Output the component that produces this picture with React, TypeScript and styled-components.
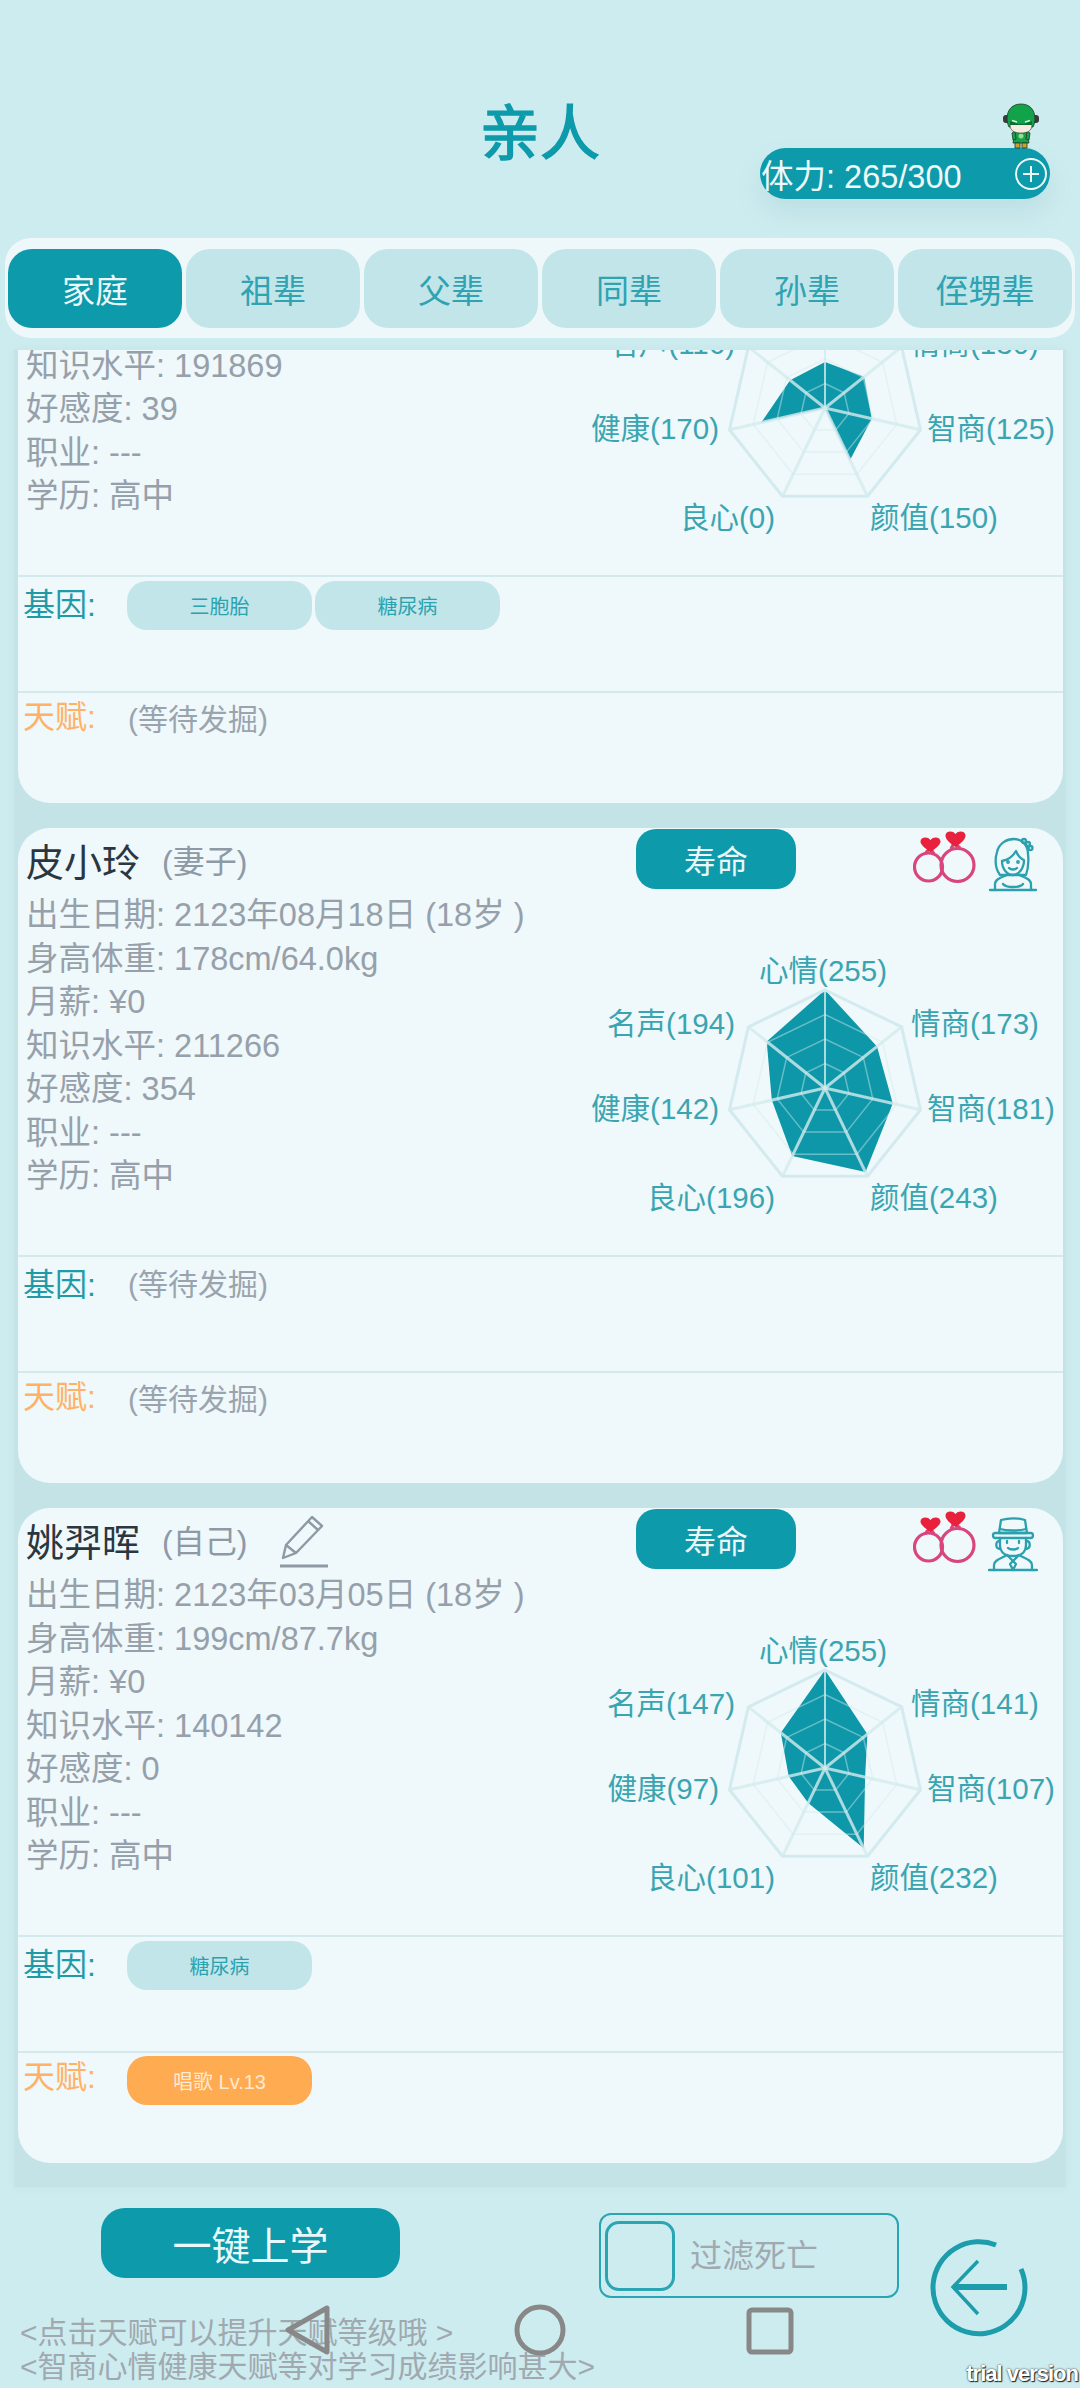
import * as React from 'react';
import styled, { createGlobalStyle } from 'styled-components';

const TEAL = '#0d9aab';
const TEXT_STACK = '"Liberation Sans", "Noto Sans CJK SC", sans-serif';

const GlobalStyle = createGlobalStyle`
  html, body {
    margin: 0;
    padding: 0;
    background: #cdecef;
  }
  body {
    font-family: ${TEXT_STACK};
  }
`;

const Page = styled.div`
  position: relative;
  width: 1080px;
  height: 2388px;
  display: flex;
  flex-direction: column;
  overflow: hidden;
  background: #cdecef;
`;

const Header = styled.header`
  height: 238px;
  flex-shrink: 0;
  display: grid;
  grid-template-columns: 1fr auto 1fr;
  box-sizing: border-box;
`;

const Title = styled.h1`
  grid-column: 2;
  margin: 0;
  padding-top: 92px;
  font-size: 60px;
  line-height: 86px;
  font-weight: 400;
  color: ${TEAL};
  -webkit-text-stroke: 1.4px ${TEAL};
`;

const StaminaWrap = styled.div`
  grid-column: 3;
  display: flex;
  flex-direction: column;
  align-items: flex-end;
  padding: 103px 30px 0 0;
`;

const Hero = styled.svg`
  display: block;
  width: 38px;
  height: 47px;
  margin: 0 10px -2px 0;
  position: relative;
  z-index: 1;
`;

const StaminaPill = styled.div`
  width: 290px;
  height: 51px;
  flex-shrink: 0;
  display: flex;
  align-items: center;
  justify-content: space-between;
  box-sizing: border-box;
  padding: 0 2px 0 1px;
  border-radius: 26px;
  background: ${TEAL};
  color: #eef9fa;
  font-size: 32.5px;
  box-shadow: 0 14px 26px rgba(90, 150, 160, 0.14);
`;

const TabBar = styled.nav`
  height: 100px;
  flex-shrink: 0;
  margin: 0 5px 0 5px;
  box-sizing: border-box;
  padding: 11px 3px;
  display: flex;
  gap: 4px;
  border-radius: 26px;
  background: #eef8fa;
`;

const Tab = styled.div<{ $active?: boolean }>`
  flex: 1;
  height: 79px;
  display: flex;
  align-items: center;
  justify-content: center;
  border-radius: 24px;
  font-size: 33px;
  background: ${(p) => (p.$active ? TEAL : '#c2e5ea')};
  color: ${(p) => (p.$active ? '#eaf8fa' : '#2fa3b1')};
`;

const ListPanel = styled.main`
  height: 1837px;
  flex-shrink: 0;
  margin: 12px 14px 0;
  box-sizing: border-box;
  padding: 0 4px 24px;
  display: flex;
  flex-direction: column;
  justify-content: flex-end;
  gap: 25px;
  overflow: hidden;
  background: #c3e3e6;
  box-shadow: 0 0 8px #c3e3e6;
`;

const Card = styled.article`
  height: 655px;
  flex-shrink: 0;
  width: 1045px;
  display: flex;
  flex-direction: column;
  border-radius: 32px;
  background: #eff8fa;
  overflow: hidden;
`;

const InfoSection = styled.section`
  height: 427px;
  flex-shrink: 0;
  display: flex;
`;

const InfoColumn = styled.div`
  width: 562px;
  flex-shrink: 0;
`;

const NameRow = styled.div`
  height: 62px;
  margin-bottom: 4px;
  display: flex;
  align-items: center;
  padding-left: 8px;
`;

const Name = styled.span`
  font-size: 38px;
  color: #2a3640;
`;

const Relation = styled.span`
  font-size: 32px;
  color: #8e99a6;
  margin-left: 22px;
`;

const EditIcon = styled.svg`
  width: 48px;
  height: 54px;
  margin: 4px 0 0 33px;
`;

const InfoLine = styled.div`
  min-height: 43.5px;
  padding-left: 8px;
  font-size: 32.5px;
  line-height: 43.5px;
  color: #96a0aa;
  white-space: pre;
`;

const ChartColumn = styled.div`
  flex: 1;
  min-width: 0;
`;

const ChartTop = styled.div`
  height: 60px;
  margin-top: 1px;
  display: flex;
  align-items: flex-start;
  padding-left: 56px;
`;

const LifeButton = styled.div`
  width: 160px;
  height: 60px;
  display: flex;
  align-items: center;
  justify-content: center;
  border-radius: 20px;
  background: ${TEAL};
  color: #eaf8fa;
  font-size: 32px;
`;

const RingsIcon = styled.svg`
  width: 63px;
  height: 56px;
  margin: 2px 0 0 117px;
`;

const PersonIcon = styled.svg`
  width: 50px;
  height: 56px;
  margin: 8px 0 0 12px;
`;

const RadarSvg = styled.svg`
  display: block;
  width: 483px;
  height: 290px;
  margin-top: 51px;
`;

const AxisLabel = styled.text`
  font-family: ${TEXT_STACK};
  font-size: 29.5px;
  fill: #3aa5b1;
  dominant-baseline: central;
`;

const DetailSection = styled.section<{ $height: number; $pad: number }>`
  height: ${(p) => p.$height}px;
  flex-shrink: 0;
  box-sizing: border-box;
  display: flex;
  align-items: flex-start;
  padding: ${(p) => p.$pad}px 0 0 7px;
  border-top: 2px solid #d3e9ec;
`;

const DetailLabel = styled.div<{ $talent?: boolean }>`
  width: 102px;
  margin-left: -2px;
  flex-shrink: 0;
  font-size: 32px;
  line-height: ${(p) => (p.$talent ? 42 : 48)}px;
  color: ${(p) => (p.$talent ? '#ffb265' : '#1f9ba8')};
`;

const Pending = styled.div`
  margin: 3px 0 0 3px;
  font-size: 30px;
  line-height: 42px;
  color: #9aa4ae;
`;

const Chips = styled.div`
  display: flex;
  gap: 3px;
  margin-left: 2px;
`;

const Chip = styled.div<{ $talent?: boolean }>`
  width: 185px;
  height: 49px;
  display: flex;
  align-items: center;
  justify-content: center;
  border-radius: 20px;
  font-size: 20px;
  background: ${(p) => (p.$talent ? '#ffab52' : '#c2e5ea')};
  color: ${(p) => (p.$talent ? '#ffe9d0' : '#2ba3af')};
`;

const Footer = styled.footer`
  flex: 1;
  display: flex;
  align-items: flex-start;
`;

const FooterLeft = styled.div`
  width: 599px;
  flex-shrink: 0;
  box-sizing: border-box;
  padding: 21px 0 0 20px;
`;

const SchoolButton = styled.div`
  width: 299px;
  height: 70px;
  margin-left: 81px;
  display: flex;
  align-items: center;
  justify-content: center;
  border-radius: 24px;
  background: ${TEAL};
  color: #eaf8fa;
  font-size: 39px;
`;

const Hints = styled.div`
  margin-top: 38px;
  font-size: 30px;
  line-height: 34px;
  color: #a0a9af;
  white-space: pre;
`;

const FilterBox = styled.div`
  width: 300px;
  height: 85px;
  margin-top: 26px;
  flex-shrink: 0;
  box-sizing: border-box;
  display: flex;
  align-items: center;
  padding-left: 4px;
  border: 2px solid #2ba5b3;
  border-radius: 12px;
`;

const FilterCheck = styled.div`
  width: 70px;
  height: 70px;
  box-sizing: border-box;
  border: 3px solid #2ba5b3;
  border-radius: 14px;
`;

const FilterText = styled.span`
  margin: 0 0 5px 15px;
  font-size: 32px;
  color: #a0a9af;
`;

const BackIcon = styled.svg`
  width: 100px;
  height: 100px;
  margin: 50px 0 0 30px;
  flex-shrink: 0;
`;

const SystemNav = styled.svg`
  position: absolute;
  left: 0;
  top: 2300px;
  width: 1080px;
  height: 60px;
  pointer-events: none;
`;

const Watermark = styled.div`
  position: absolute;
  right: 2px;
  bottom: 2px;
  font-size: 22px;
  line-height: 24px;
  font-weight: 700;
  letter-spacing: -1px;
  color: #ffffff;
  text-shadow: 0 0 2px #222, 1px 1px 1px #222;
`;

const AXES = ['心情', '情商', '智商', '颜值', '良心', '健康', '名声'];

const LABEL_SPOTS: Array<{ x: number; y: number; anchor: 'start' | 'middle' | 'end' }> = [
  { x: 243, y: 30, anchor: 'middle' },
  { x: 331, y: 83, anchor: 'start' },
  { x: 347, y: 168, anchor: 'start' },
  { x: 290, y: 257, anchor: 'start' },
  { x: 195, y: 257, anchor: 'end' },
  { x: 139, y: 168, anchor: 'end' },
  { x: 155, y: 83, anchor: 'end' },
];

const CX = 245;
const CY = 148;
const RADIUS = 98;

const polar = (index: number, r: number) => {
  const a = (index * 2 * Math.PI) / 7;
  return [CX + r * Math.sin(a), CY - r * Math.cos(a)];
};

const ringPoints = (r: number) =>
  AXES.map((_, i) => polar(i, r).map((n) => n.toFixed(1)).join(',')).join(' ');

const Radar = ({ values, scrolled }: { values: number[]; scrolled?: boolean }) => {
  const shape = values
    .map((v, i) => polar(i, (v / 255) * RADIUS).map((n) => n.toFixed(1)).join(','))
    .join(' ');
  return (
    <RadarSvg viewBox="0 0 483 290">
      <polygon points={shape} fill="#0e97a8" />
      {[0.25, 0.5, 0.75].map((k) => (
        <polygon key={k} points={ringPoints(RADIUS * k)} fill="none" stroke="#d3ebee" strokeOpacity="0.45" strokeWidth="1.5" />
      ))}
      <polygon points={ringPoints(RADIUS)} fill="none" stroke="#d3ebee" strokeWidth="3" />
      {AXES.map((_, i) => {
        const [x, y] = polar(i, RADIUS);
        return <line key={i} x1={CX} y1={CY} x2={x} y2={y} stroke="#d3ebee" strokeOpacity="0.8" strokeWidth={i === 0 ? 2 : 3} />;
      })}
      {AXES.map((axis, i) =>
        scrolled && i === 0 ? null : (
          <AxisLabel key={axis} x={LABEL_SPOTS[i].x} y={LABEL_SPOTS[i].y} textAnchor={LABEL_SPOTS[i].anchor}>
            {axis}({values[i]})
          </AxisLabel>
        )
      )}
    </RadarSvg>
  );
};

const Rings = () => (
  <RingsIcon viewBox="0 0 63 56">
    <g fill="none" stroke="#d8457f" strokeWidth="3.2">
      <circle cx="15.5" cy="36" r="14" />
      <circle cx="44.5" cy="34" r="16.5" />
      <path d="M12 23l5-6 4 6" />
      <path d="M38 18l3-6 6 5" />
    </g>
    <path d="M17.500 21C10 16 7.500 13 7.500 10.500c0-4.500 7-5.500 10-1.500 3-4 10-3 10 1.500 0 2.500-2.500 5.500-10 10.500z" fill="#e8213c" />
    <path d="M42.500 16C35 11 32.500 7.500 32.500 4.500c0-4.500 7-5.500 10-1.500 3-4 10-3 10 1.500 0 3-2.500 6.500-10 11.500z" fill="#e8213c" />
  </RingsIcon>
);

const WomanIcon = () => (
  <PersonIcon viewBox="0 0 50 56" fill="none" stroke="#2ba0ae" strokeWidth="2.3" strokeLinejoin="round" strokeLinecap="round">
    <path d="M2 53h46" />
    <path d="M7 53v-6c0-5 7-7 12-9M43 53v-6c0-5-7-7-12-9" />
    <path d="M15 47c3 4 17 4 20 0" />
    <path d="M12 38C7 31 7 22 9 15 11 6 19 2 26 2c8 0 14 6 14 15 1 8 0 15-2 21z" />
    <path d="M14 24c6-1 11-5 14-10 2 5 5 8 8 9 0 8-5 15-11 15S14 32 14 24z" />
    <circle cx="36" cy="4" r="2" />
    <circle cx="40" cy="7" r="2" />
    <circle cx="42.500" cy="11" r="2" />
    <path d="M21 31c2 2 6 2 8 0" />
    <circle cx="20" cy="25" r="0.800" />
    <circle cx="30" cy="25" r="0.800" />
  </PersonIcon>
);

const ManIcon = () => (
  <PersonIcon viewBox="0 0 50 56" fill="none" stroke="#2ba0ae" strokeWidth="2.3" strokeLinejoin="round" strokeLinecap="round">
    <path d="M1 53h48" />
    <path d="M6 53v-5c0-5 8-7 13-10l6 6 6-6c5 3 13 5 13 10v5" />
    <path d="M25 44l-3 3 3 6 3-6z" />
    <path d="M13 3c7-2 17-2 24 0l2 13H11z" />
    <path d="M12 12c7 2 19 2 26 0" />
    <rect x="5" y="16" width="40" height="5" rx="2.500" />
    <path d="M12 21v7c0 8 6 11 13 11s13-3 13-11v-7" />
    <path d="M12 24c-5 0-5 7 0 8M38 24c5 0 5 7 0 8" />
    <path d="M20 31c2 2 8 2 10 0" />
    <path d="M19 24v2M31 24v2" />
  </PersonIcon>
);

interface Person {
  name: string;
  relation: string;
  lines: string[];
  values: number[];
  genes: string[];
  talents: string[];
  gender: 'f' | 'm';
  editable?: boolean;
  scrolled?: boolean; // top of the card has scrolled under the tab bar
}

const PEOPLE: Person[] = [
  {
    name: '',
    relation: '',
    lines: ['', '', '', '知识水平: 191869', '好感度: 39', '职业: ---', '学历: 高中'],
    values: [120, 130, 125, 150, 0, 170, 116],
    genes: ['三胞胎', '糖尿病'],
    talents: [],
    gender: 'm',
    scrolled: true,
  },
  {
    name: '皮小玲',
    relation: '(妻子)',
    lines: ['出生日期: 2123年08月18日 (18岁 )', '身高体重: 178cm/64.0kg', '月薪: ¥0', '知识水平: 211266', '好感度: 354', '职业: ---', '学历: 高中'],
    values: [255, 173, 181, 243, 196, 142, 194],
    genes: [],
    talents: [],
    gender: 'f',
  },
  {
    name: '姚羿晖',
    relation: '(自己)',
    lines: ['出生日期: 2123年03月05日 (18岁 )', '身高体重: 199cm/87.7kg', '月薪: ¥0', '知识水平: 140142', '好感度: 0', '职业: ---', '学历: 高中'],
    values: [255, 141, 107, 232, 101, 97, 147],
    genes: ['糖尿病'],
    talents: ['唱歌 Lv.13'],
    gender: 'm',
    editable: true,
  },
];

const TABS = ['家庭', '祖辈', '父辈', '同辈', '孙辈', '侄甥辈'];

const PersonCard = ({ person }: { person: Person }) => (
  <Card>
    <InfoSection>
      <InfoColumn>
        <NameRow>
          <Name>{person.name}</Name>
          <Relation>{person.relation}</Relation>
          {person.editable && (
            <EditIcon viewBox="0 0 48 54" fill="none" stroke="#8d99a5" strokeWidth="2.4" strokeLinejoin="round">
              <path d="M3 44l3-13L32 3l10 9-26 27z" />
              <path d="M6 31l10 8M28 7l10 9" />
              <path d="M0 52h48" strokeWidth="3" />
            </EditIcon>
          )}
        </NameRow>
        {person.lines.map((line, i) => (
          <InfoLine key={i}>{line}</InfoLine>
        ))}
      </InfoColumn>
      <ChartColumn>
        <ChartTop>
          {!person.scrolled && (
            <>
              <LifeButton>寿命</LifeButton>
              <Rings />
              {person.gender === 'f' ? <WomanIcon /> : <ManIcon />}
            </>
          )}
        </ChartTop>
        <Radar values={person.values} scrolled={person.scrolled} />
      </ChartColumn>
    </InfoSection>
    <DetailSection $height={116} $pad={4}>
      <DetailLabel>基因:</DetailLabel>
      {person.genes.length ? (
        <Chips>
          {person.genes.map((gene) => (
            <Chip key={gene}>{gene}</Chip>
          ))}
        </Chips>
      ) : (
        <Pending>(等待发掘)</Pending>
      )}
    </DetailSection>
    <DetailSection $height={112} $pad={3}>
      <DetailLabel $talent>天赋:</DetailLabel>
      {person.talents.length ? (
        <Chips>
          {person.talents.map((talent) => (
            <Chip key={talent} $talent>{talent}</Chip>
          ))}
        </Chips>
      ) : (
        <Pending>(等待发掘)</Pending>
      )}
    </DetailSection>
  </Card>
);

const App = () => (
  <Page>
    <GlobalStyle />
    <Header>
      <Title>亲人</Title>
      <StaminaWrap>
        <Hero viewBox="0 0 38 47">
          <path d="M13 28h12l2 12h-16z" fill="#16a34a" stroke="#24352a" strokeWidth="0.800" />
          <path d="M13 40h5v5h-5zM20 40h5v5h-5z" fill="#c9a227" stroke="#24352a" strokeWidth="0.800" />
          <path d="M10 30l3-2 1 8-3 1zM28 30l-3-2-1 8 3 1z" fill="#16a34a" stroke="#24352a" strokeWidth="0.800" />
          <circle cx="19" cy="33" r="2.500" fill="#8fe08f" />
          <rect x="1" y="12" width="36" height="8" rx="3" fill="#3a3a3a" />
          <path d="M5 16C5 6 11 1 19 1s14 5 14 15c0 3-1 6-2 8H7c-1-2-2-5-2-8z" fill="#12a24a" stroke="#24352a" strokeWidth="0.800" />
          <path d="M8 22c2-2 20-2 22 0 0 6-5 8-11 8s-11-2-11-8z" fill="#f6ece0" stroke="#24352a" strokeWidth="0.600" />
          <path d="M8 18l8 3h6l8-3v4H8z" fill="#0c6e33" />
          <path d="M10 17.500l5 1.500M28 17.500l-5 1.500" stroke="#d6f5dd" strokeWidth="1.400" />
        </Hero>
        <StaminaPill>
          <span>体力: 265/300</span>
          <svg width="34" height="34" viewBox="0 0 34 34" fill="none" stroke="#eef9fa" strokeWidth="2">
            <circle cx="17" cy="17" r="15" />
            <path d="M17 9v16M9 17h16" />
          </svg>
        </StaminaPill>
      </StaminaWrap>
    </Header>
    <TabBar>
      {TABS.map((tab, i) => (
        <Tab key={tab} $active={i === 0}>{tab}</Tab>
      ))}
    </TabBar>
    <ListPanel>
      {PEOPLE.map((person, i) => (
        <PersonCard key={i} person={person} />
      ))}
    </ListPanel>
    <Footer>
      <FooterLeft>
        <SchoolButton>一键上学</SchoolButton>
        <Hints>
          {'<点击天赋可以提升天赋等级哦 >\n<智商心情健康天赋等对学习成绩影响甚大>'}
        </Hints>
      </FooterLeft>
      <FilterBox>
        <FilterCheck />
        <FilterText>过滤死亡</FilterText>
      </FilterBox>
      <BackIcon viewBox="0 0 100 100" fill="none" stroke="#1d9cab" strokeWidth="5">
        <path d="M67 8A46 46 0 1 0 92 32" />
        <path d="M24 50h54" strokeWidth="6" />
        <path d="M49 24L24 50l25 27" strokeWidth="3.500" />
      </BackIcon>
    </Footer>
    <SystemNav viewBox="0 0 1080 60" fill="none" stroke="#888888" strokeWidth="5">
      <path d="M327 8L288 30l39 22z" strokeLinejoin="round" />
      <circle cx="540" cy="30" r="23" />
      <rect x="749" y="10" width="42" height="42" rx="3" />
    </SystemNav>
    <Watermark>trial version</Watermark>
  </Page>
);

export default App;
